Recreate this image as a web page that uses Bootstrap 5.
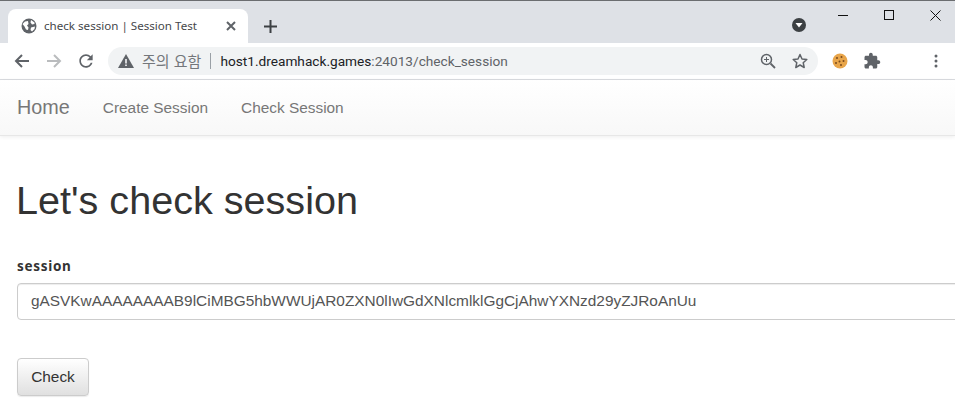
<!DOCTYPE html>
<html lang="ko">
<head>
  <meta charset="UTF-8" />
  <title>check session | Session Test</title>
  <link rel="stylesheet" href="https://cdn.jsdelivr.net/npm/bootstrap@5.3.2/dist/css/bootstrap.min.css">
  <style>
    html, body { height: 100%; overflow: hidden; }
    body { font-family: "Liberation Sans", Arial, sans-serif; color: #333; background: #fff; }

    /* browser frame */
    .tabstrip { height: 43px; background: #dee1e6; border-top: 1px solid #6b6d70; padding-left: 8px; }
    .tab-shape { width: 240px; height: 34px; margin-top: 8px; background: #fff; border-radius: 8px 8px 0 0; padding: 0 10px 0 13px; }
    .tab-title { font-family: "Noto Sans", "Liberation Sans", sans-serif; font-size: 11.6px; color: #45474a; width: 182px; margin-left: 7px; white-space: nowrap; }
    .new-tab { margin-left: 16px; margin-top: 8px; height: 34px; }
    .win-controls { width: 138px; margin-right: -3px; }
    .win-btn { width: 46px; height: 28px; }
    .profile-dot { margin-right: 14px; margin-top: 17px; }
    .toolbar { height: 37px; background: #fff; border-bottom: 1px solid #dadce0; padding-left: 12px; }
    .nav-ico { width: 20px; height: 20px; margin-right: 12px; }
    .omnibox { width: 710px; height: 28px; background: #f1f3f4; border-radius: 14px; padding: 0 10px 0 10px; font-size: 14px; white-space: nowrap; }
    .warn-label { font-family: "Noto Sans CJK KR", sans-serif; font-size: 15px; color: #74777b; margin-left: 8px; }
    .omni-sep { width: 1px; height: 16px; background: #9aa0a6; margin: 0 9px 0 9px; }
    .url-host { font-family: "Roboto", "Liberation Sans", sans-serif; font-size: 13.67px; color: #202124; }
    .url-path { font-family: "Roboto", "Liberation Sans", sans-serif; font-size: 13.67px; color: #5f6368; }
    .ext-area { margin-left: 14px; }
    .ext-puzzle { margin-left: 15px; }
    .ext-menu { margin-left: 53px; }

    /* page */
    .site-nav { height: 56px; padding: 0; background: linear-gradient(#fff, #f8f8f8); border-bottom: 1px solid #e7e7e7; box-shadow: 0 1px 4px rgba(0,0,0,.07); }
    .site-nav .container-fluid { padding: 0 17px; justify-content: flex-start; }
    .site-nav .navbar-brand { font-size: 19.8px; color: #777; padding: 1px 0 0; margin: 0 33px 0 0; }
    .site-nav .nav-link { font-size: 15.4px; color: #777; padding: 1px 0 0; margin-right: 33px; }
    .page-body { padding: 0 0 0 17px; }
    .page-title { font-size: 39.6px; font-weight: 400; line-height: 44px; color: #333; margin: 42px 0 34px -1px; }
    .field-label { font-family: "Noto Sans", sans-serif; font-weight: 700; font-size: 13.5px; letter-spacing: .7px; line-height: 20px; color: #333; margin-bottom: 7px; display: block; }
    .session-input { height: 37px; width: calc(100% + 40px); font-size: 15.4px; color: #555; padding: 5px 13px 7px; border: 1px solid #ccc; border-radius: 4px; box-shadow: inset 0 1px 1px rgba(0,0,0,.075); }
    .check-btn { width: 72px; height: 38px; margin-top: 38px; padding: 0; font-size: 15.4px; color: #333; background: linear-gradient(#fff, #e0e0e0); border: 1px solid #ccc; border-radius: 4px; box-shadow: 0 1px 1px rgba(0,0,0,.08); }
  </style>
</head>
<body>
  <div class="tabstrip d-flex">
    <div class="tab-shape d-flex align-items-center">
      <svg width="16" height="16" viewBox="0 0 16 16"><circle cx="8" cy="8" r="7.500" fill="#5f6368"/><path d="M1.500 6 4 3.500 7 3 7.500 6 6 7.500 7.500 9.500 7 12 5 11.500 3.500 8.500zM10 2 13.500 4.500 13.500 6 11 6.500 9.500 4.500zM10 9.500 14 8.500 13.500 11 11 13.500 9.500 12z" fill="#fff"/></svg>
      <span class="tab-title">check session | Session Test</span>
      <svg width="10" height="10" viewBox="0 0 10 10"><path d="M1 1 9 9M9 1 1 9" stroke="#5f6368" stroke-width="2"/></svg>
    </div>
    <div class="new-tab d-flex align-items-center">
      <svg width="13" height="13" viewBox="0 0 13 13"><path d="M6.500 0v13M0 6.500h13" stroke="#3c4043" stroke-width="2"/></svg>
    </div>
    <div class="ms-auto d-flex">
      <svg class="profile-dot" width="14" height="14" viewBox="0 0 14 14"><circle cx="7" cy="7" r="7" fill="#3c4043"/><path d="M3.500 5h7L7 9.500z" fill="#fff"/></svg>
      <div class="win-controls d-flex">
        <div class="win-btn d-flex align-items-center justify-content-center"><svg width="10" height="10" viewBox="0 0 10 10"><path d="M0 5.500h10" stroke="#111"/></svg></div>
        <div class="win-btn d-flex align-items-center justify-content-center"><svg width="10" height="10" viewBox="0 0 10 10"><rect x=".5" y=".5" width="9" height="9" fill="none" stroke="#111"/></svg></div>
        <div class="win-btn d-flex align-items-center justify-content-center"><svg width="11" height="11" viewBox="0 0 11 11"><path d="M.5.500l10 10M10.500.500l-10 10" stroke="#111"/></svg></div>
      </div>
    </div>
  </div>

  <div class="toolbar d-flex align-items-center">
    <svg class="nav-ico" viewBox="0 0 20 20"><path d="M17 10H4M10 4l-6 6 6 6" fill="none" stroke="#5f6368" stroke-width="2"/></svg>
    <svg class="nav-ico" viewBox="0 0 20 20"><path d="M3 10h13M10 4l6 6-6 6" fill="none" stroke="#babcbe" stroke-width="2"/></svg>
    <svg class="nav-ico" viewBox="0 0 24 24"><path d="M17.650 6.350C16.200 4.900 14.210 4 12 4c-4.420 0-7.990 3.580-7.990 8s3.570 8 7.990 8c3.730 0 6.840-2.550 7.730-6h-2.080c-.82 2.330-3.040 4-5.650 4-3.310 0-6-2.690-6-6s2.690-6 6-6c1.660 0 3.140.69 4.220 1.780L13 11h7V4l-2.350 2.350z" fill="#5f6368"/></svg>
    <div class="omnibox d-flex align-items-center">
      <svg width="16" height="14" viewBox="0 0 16 14"><path d="M8 0 16 14H0z" fill="#5f6368"/><path d="M8 5v4.500M8 10.500v1.500" stroke="#fff" stroke-width="1.500"/></svg>
      <span class="warn-label">주의 요함</span>
      <span class="omni-sep"></span>
      <span class="url-host">host1.dreamhack.games</span><span class="url-path">:24013/check_session</span>
      <svg class="ms-auto me-3" width="16" height="16" viewBox="0 0 16 16"><circle cx="6.500" cy="6.500" r="5" fill="none" stroke="#5f6368" stroke-width="1.500"/><path d="M10.500 10.500 15 15" stroke="#5f6368" stroke-width="1.800"/><path d="M6.500 4v5M4 6.500h5" stroke="#5f6368"/></svg>
      <svg width="16" height="16" viewBox="0 0 16 16"><path d="M8 1.500 10 6l4.800.500-3.600 3.200 1 4.800L8 12l-4.200 2.500 1-4.800L1.200 6.500 6 6z" fill="none" stroke="#5f6368" stroke-width="1.500" stroke-linejoin="round"/></svg>
    </div>
    <div class="ext-area d-flex align-items-center">
      <svg width="16" height="16" viewBox="0 0 16 16"><circle cx="8" cy="8" r="7.500" fill="#e8a54a"/><circle cx="5" cy="5" r="1" fill="#7a4a1c"/><circle cx="9.500" cy="4" r="1" fill="#7a4a1c"/><circle cx="11.500" cy="8" r="1" fill="#7a4a1c"/><circle cx="7.500" cy="8.500" r="1" fill="#7a4a1c"/><circle cx="4" cy="10" r="1" fill="#7a4a1c"/><circle cx="9" cy="12" r="1" fill="#7a4a1c"/></svg>
      <svg class="ext-puzzle" width="18" height="18" viewBox="0 0 24 24"><path d="M20.500 11H19V7c0-1.100-.9-2-2-2h-4V3.500C13 2.120 11.880 1 10.500 1S8 2.120 8 3.500V5H4c-1.100 0-1.990.9-1.990 2v3.800H3.500c1.490 0 2.700 1.210 2.700 2.700s-1.210 2.700-2.700 2.700H2V20c0 1.100.9 2 2 2h3.800v-1.500c0-1.490 1.210-2.700 2.700-2.700 1.490 0 2.700 1.210 2.700 2.700V22H17c1.100 0 2-.9 2-2v-4h1.500c1.380 0 2.500-1.120 2.500-2.500S21.880 11 20.500 11z" fill="#5f6368"/></svg>
      <svg class="ext-menu" width="4" height="14" viewBox="0 0 4 14"><circle cx="2" cy="2" r="1.500" fill="#5f6368"/><circle cx="2" cy="7" r="1.500" fill="#5f6368"/><circle cx="2" cy="12" r="1.500" fill="#5f6368"/></svg>
    </div>
  </div>

  <nav class="navbar navbar-expand site-nav">
    <div class="container-fluid">
      <a class="navbar-brand" href="#">Home</a>
      <a class="nav-link" href="#">Create Session</a>
      <a class="nav-link" href="#">Check Session</a>
    </div>
  </nav>

  <div class="page-body">
    <h1 class="page-title">Let's check session</h1>
    <form onsubmit="return false">
      <label class="field-label" for="session">session</label>
      <input type="text" class="form-control session-input" id="session" value="gASVKwAAAAAAAAB9lCiMBG5hbWWUjAR0ZXN0lIwGdXNlcmlklGgCjAhwYXNzd29yZJRoAnUu">
      <button type="submit" class="btn check-btn">Check</button>
    </form>
  </div>
  <script src="https://cdn.jsdelivr.net/npm/bootstrap@5.3.2/dist/js/bootstrap.bundle.min.js"></script>
</body>
</html>
